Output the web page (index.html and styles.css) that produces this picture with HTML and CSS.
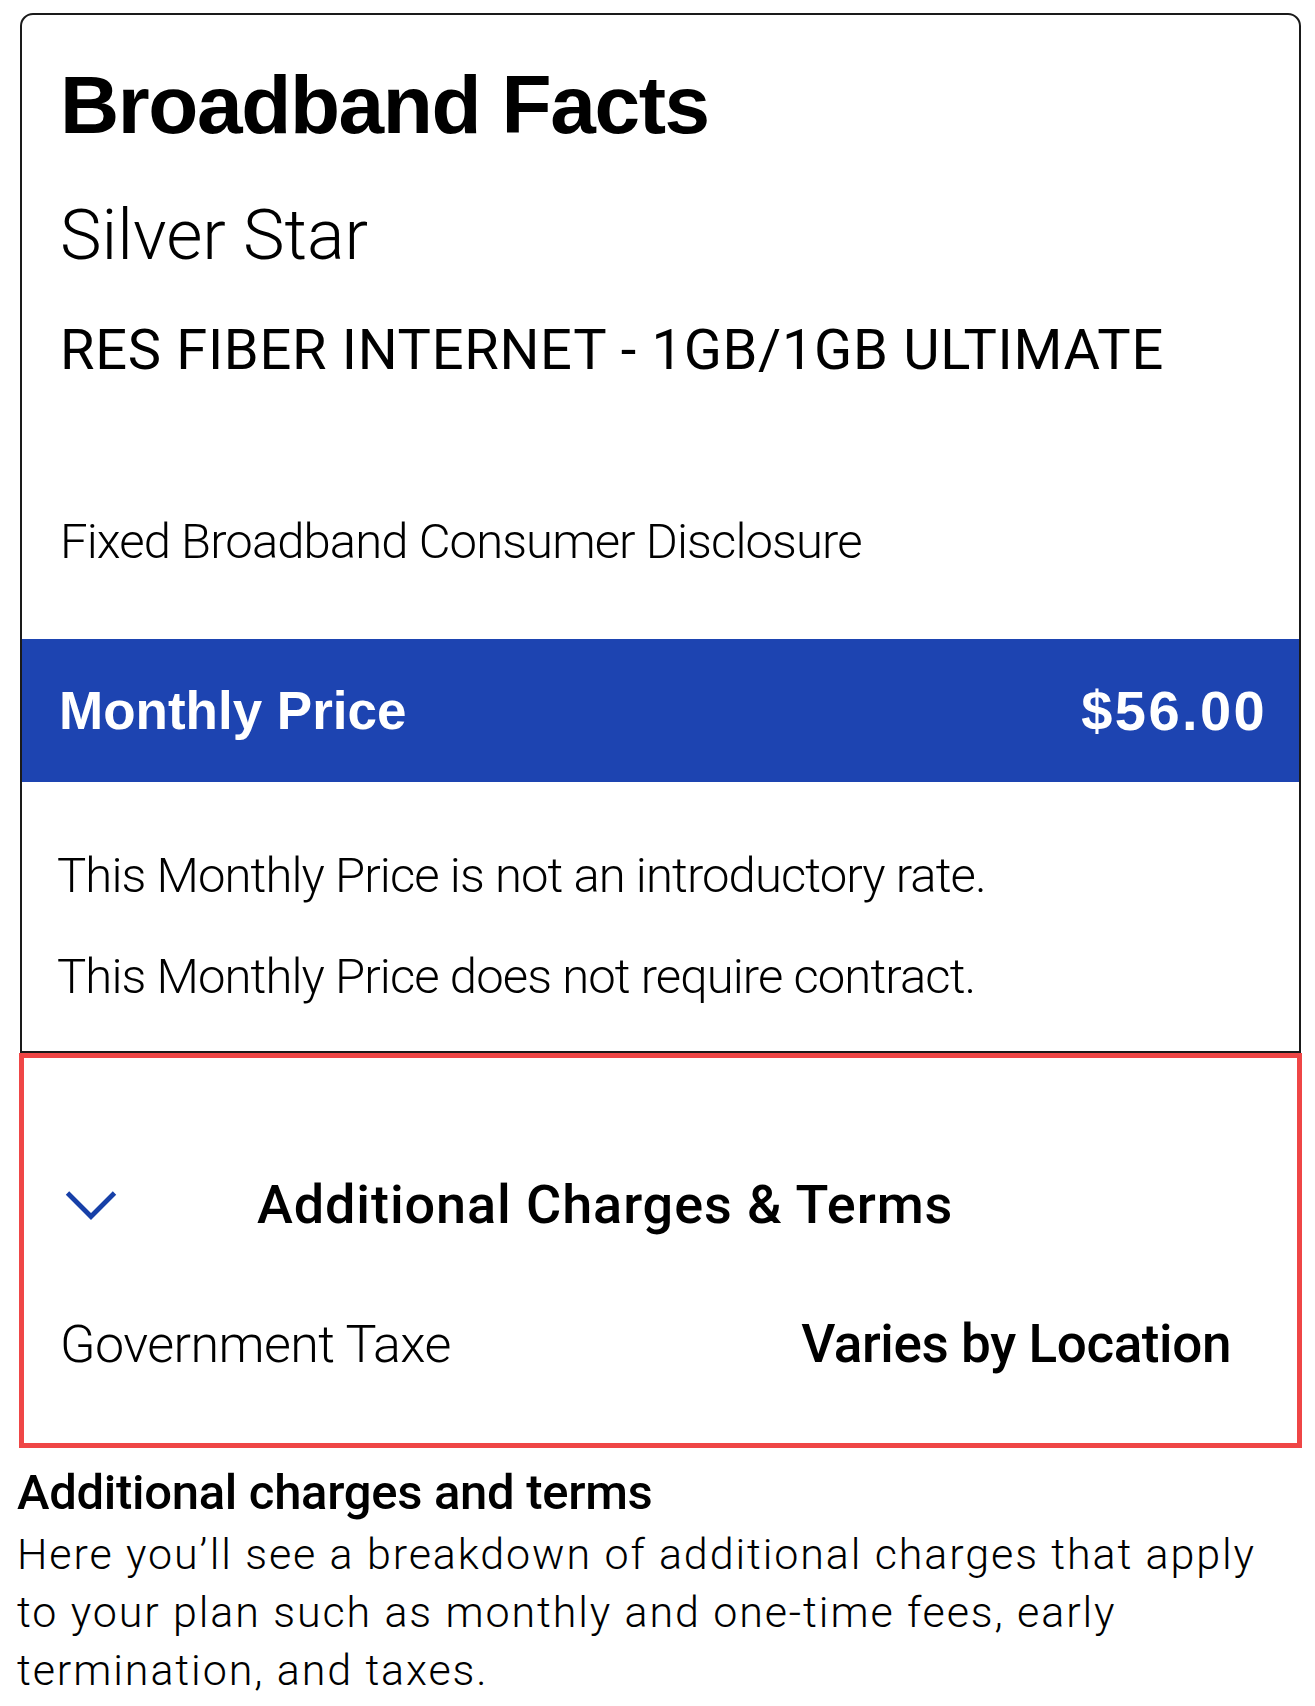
FILE: index.html
```html
<!DOCTYPE html>
<html lang="en">
<head>
<meta charset="utf-8">
<title>Broadband Facts</title>
<link rel="stylesheet" href="styles.css">
</head>
<body>
<div class="page">
  <section class="label">
    <div class="label-head">
      <h1 class="label-title">Broadband Facts</h1>
      <p class="provider">Silver Star</p>
      <p class="plan">RES FIBER INTERNET - 1GB/1GB ULTIMATE</p>
      <p class="disclosure">Fixed Broadband Consumer Disclosure</p>
    </div>
    <div class="price-bar">
      <span class="price-label">Monthly Price</span>
      <span class="price-value">$56.00</span>
    </div>
    <div class="price-notes">
      <p class="note">This Monthly Price is not an introductory rate.</p>
      <p class="note">This Monthly Price does not require contract.</p>
    </div>
  </section>
  <section class="charges">
    <div class="charges-head">
      <svg class="chevron" viewBox="0 0 52 30" width="52" height="30" aria-hidden="true">
        <polyline points="2.5,3 26,26.5 49.5,3" fill="none" stroke="#1740a8" stroke-width="4.8"/>
      </svg>
      <span class="charges-title">Additional Charges &amp; Terms</span>
    </div>
    <div class="charge-row">
      <span class="charge-name">Government Taxe</span>
      <span class="charge-value">Varies by Location</span>
    </div>
  </section>
  <div class="explain">
    <h2 class="explain-title">Additional charges and terms</h2>
    <p class="explain-text">Here you’ll see a breakdown of additional charges that apply to your plan such as monthly and one-time fees, early termination, and taxes.</p>
  </div>
</div>
</body>
</html>
```

FILE: styles.css
```css
* {
  box-sizing: border-box;
}

html, body {
  margin: 0;
  padding: 0;
  background: #ffffff;
}

body {
  font-family: Roboto, "Liberation Sans", Arial, sans-serif;
  color: #000000;
}

.page {
  width: 1315px;
  padding: 13px 0 0 17px;
}

p, h1, h2 {
  margin: 0;
}

/* Card */
.label {
  width: 1281px;
  margin-left: 3px;
  border: 2px solid #1a1a1a;
  border-radius: 13px 13px 0 0;
}

.label-head {
  padding: 48px 40px 73px 38px;
}

.label-title {
  font-family: "Liberation Sans", Arial, sans-serif;
  font-size: 82px;
  line-height: 83px;
  font-weight: 700;
  letter-spacing: -1.4px;
}

.provider {
  margin-top: 53px;
  font-size: 70px;
  line-height: 72px;
  font-weight: 300;
}

.plan {
  margin-top: 51px;
  font-size: 56px;
  line-height: 56px;
  font-weight: 400;
  letter-spacing: 0.7px;
}

.disclosure {
  margin-top: 139px;
  font-size: 49px;
  line-height: 49px;
  font-weight: 300;
  letter-spacing: -0.9px;
}

.price-bar {
  height: 143px;
  background: #1d44b1;
  color: #ffffff;
  display: flex;
  align-items: center;
  justify-content: space-between;
  padding: 0 34px 0 37px;
}

.price-label,
.price-value {
  font-family: "Liberation Sans", Arial, sans-serif;
  font-size: 53px;
  line-height: 53px;
  font-weight: 700;
}

.price-value {
  font-size: 56px;
  letter-spacing: 2.4px;
  margin-right: -2px;
}

.price-notes {
  padding: 69px 36px 50px 35px;
  display: flex;
  flex-direction: column;
  gap: 52px;
}

.note {
  font-size: 49px;
  line-height: 49px;
  font-weight: 300;
  letter-spacing: -0.9px;
}

/* Highlighted charges section */
.charges {
  width: 1283px;
  margin-left: 2px;
  border: 5px solid #ef4646;
  padding: 120px 66px 72px 0;
}

.charges-head {
  display: flex;
  align-items: center;
  padding-left: 41px;
  gap: 140px;
}

.chevron {
  display: block;
  flex: none;
}

.charges-title {
  font-size: 54px;
  line-height: 54px;
  font-weight: 500;
  letter-spacing: 0.9px;
}

.charge-row {
  margin-top: 86px;
  padding-left: 36px;
  display: flex;
  align-items: baseline;
  justify-content: space-between;
}

.charge-name {
  font-size: 52px;
  line-height: 52px;
  font-weight: 300;
  letter-spacing: -0.6px;
}

.charge-value {
  font-size: 53px;
  line-height: 53px;
  font-weight: 500;
  letter-spacing: -0.4px;
}

/* Explanation below */
.explain {
  margin-top: 20px;
  width: 1262px;
}

.explain-title {
  font-size: 49px;
  line-height: 49px;
  font-weight: 500;
  letter-spacing: -0.3px;
}

.explain-text {
  margin-top: 8px;
  font-size: 43px;
  line-height: 58px;
  font-weight: 300;
  letter-spacing: 1.9px;
}
```
